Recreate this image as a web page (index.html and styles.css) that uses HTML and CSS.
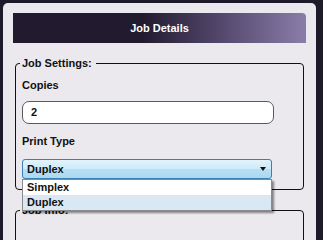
FILE: index.html
```html
<!DOCTYPE html>
<html>
<head>
<meta charset="utf-8">
<link rel="stylesheet" href="styles.css">
</head>
<body>
<div class="panel">
  <div class="header">Job Details</div>
  <fieldset class="group">
    <legend class="legend">Job Settings:</legend>
    <div class="label first">Copies</div>
    <div class="input">2</div>
    <div class="label second">Print Type</div>
    <div class="select">
      <span class="select-value">Duplex</span>
      <span class="arrow"></span>
      <div class="dropdown">
        <div class="option">Simplex</div>
        <div class="option active">Duplex</div>
      </div>
    </div>
  </fieldset>
  <fieldset class="group next">
    <legend class="legend">Job Info:</legend>
  </fieldset>
</div>
</body>
</html>
```
FILE: styles.css
```css
html, body {
  margin: 0;
  padding: 0;
  height: 100%;
  overflow: hidden;
}
body {
  background: #1f1a29;
  font-family: "Liberation Sans", Arial, sans-serif;
  font-size: 11px;
  color: #111;
}
.panel {
  box-sizing: border-box;
  margin: 3px 0 0 3px;
  width: 313px;
  height: calc(100% - 3px);
  overflow: hidden;
  padding: 10px;
  background: #ebe8ee;
  border-radius: 5px 5px 0 0;
}
.header {
  height: 30px;
  line-height: 31px;
  text-align: center;
  color: #fff;
  font-weight: bold;
  border-radius: 0 4px 0 0;
  background: linear-gradient(to right, #221a2f 0%, #221a2f 44%, #4e4366 68%, #8a7daa 100%);
}
.group {
  margin: 13px 2px 0;
  padding: 0 5px 10px;
  border: 1px solid #111;
  border-radius: 4px;
}
.group.next {
  margin-top: 13px;
  min-height: 60px;
}
.legend {
  margin-left: -1px;
  padding: 0 4px 0 2px;
  line-height: 14px;
  font-weight: bold;
}
.label {
  font-weight: bold;
  line-height: 14px;
  margin-left: 1px;
}
.label.first {
  margin-top: 8px;
}
.label.second {
  margin-top: 10px;
}
.input {
  margin-top: 9px;
  margin-left: 1px;
  width: 234px;
  height: 21px;
  line-height: 21px;
  padding: 0 8px;
  background: #fff;
  border: 1px solid #5a5a5a;
  border-radius: 7px;
  font-weight: bold;
}
.select {
  position: relative;
  margin-top: 11px;
  margin-left: 1px;
  width: 244px;
  height: 18px;
  border: 1px solid #3c7fb1;
  border-radius: 3px;
  background: linear-gradient(#e3f3fc 0%, #cdeaf8 48%, #b8e0f5 52%, #a9d9f2 100%);
  display: flex;
  align-items: center;
  justify-content: space-between;
  padding: 0 0 0 4px;
}
.select-value {
  font-weight: bold;
  line-height: 18px;
}
.arrow {
  width: 0;
  height: 0;
  margin-right: 5px;
  border-left: 3.5px solid transparent;
  border-right: 3.5px solid transparent;
  border-top: 4px solid #111;
}
.dropdown {
  position: absolute;
  top: 19px;
  left: -1px;
  width: 248px;
  background: #fff;
  border: 1px solid #8a8a8a;
  box-shadow: 2px 2px 2px rgba(0, 0, 0, 0.45);
  z-index: 2;
}
.option {
  height: 15px;
  line-height: 15px;
  padding-left: 4px;
  font-weight: bold;
}
.option.active {
  background: #dae8f3;
}
```
